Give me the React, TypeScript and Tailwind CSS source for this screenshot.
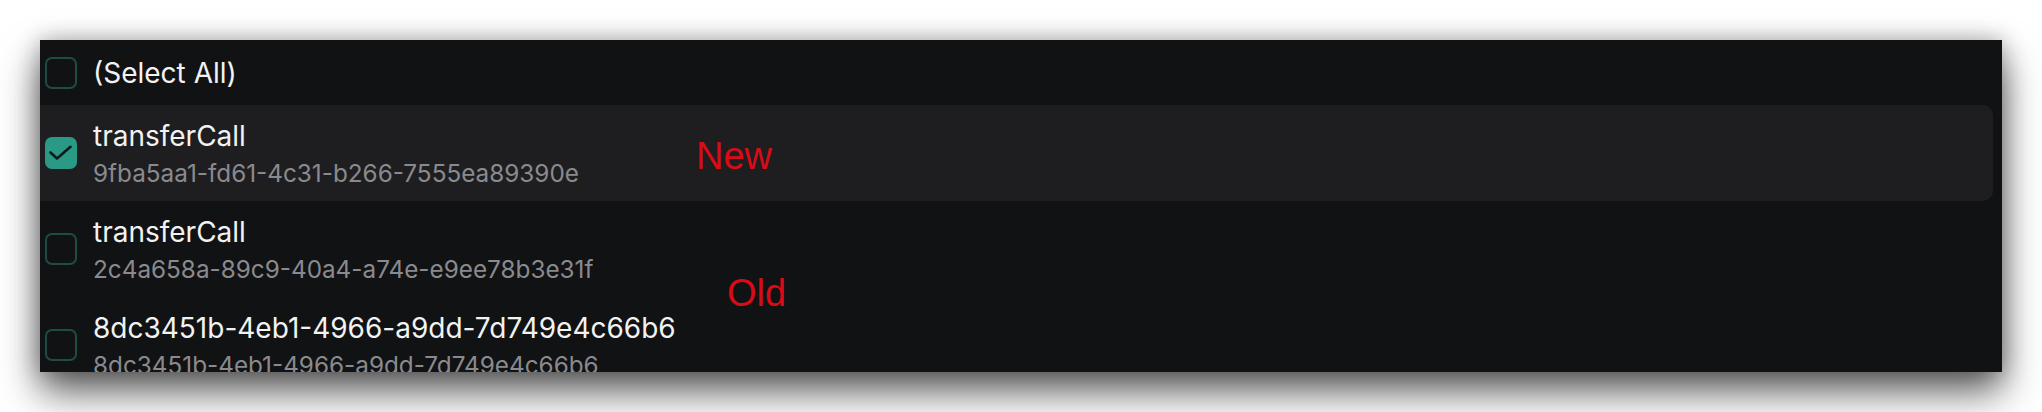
const items = [
  { title: "transferCall", id: "9fba5aa1-fd61-4c31-b266-7555ea89390e", checked: true },
  { title: "transferCall", id: "2c4a658a-89c9-40a4-a74e-e9ee78b3e31f", checked: false },
  {
    title: "8dc3451b-4eb1-4966-a9dd-7d749e4c66b6",
    id: "8dc3451b-4eb1-4966-a9dd-7d749e4c66b6",
    checked: false,
  },
];

function Checkbox({ checked }: { checked: boolean }) {
  if (checked) {
    return (
      <div className="w-8 h-8 shrink-0 rounded-[7px] bg-[#2a9a87] flex items-center justify-center">
        <svg width="32" height="32" viewBox="0 0 32 32" fill="none">
          <path
            d="M5.5 15.5 L12 21.5 L25.5 9.8"
            stroke="#0f1a18"
            strokeWidth="2.6"
            strokeLinecap="round"
            strokeLinejoin="round"
          />
        </svg>
      </div>
    );
  }
  return <div className="w-8 h-8 shrink-0 rounded-[7px] border-2 border-[#1f4c45]" />;
}

export default function App() {
  return (
    <div className="w-[2042px] h-[412px] bg-white pt-10 px-10 font-['Inter',sans-serif]">
      <div className="relative h-[332px] bg-[#111214] overflow-hidden shadow-[0_20px_36px_rgba(0,0,0,0.62),0_0_22px_rgba(0,0,0,0.28)]">
        <div className="pr-[9px]">
          <div className="h-[65px] flex items-center gap-4 pl-[5px]">
            <Checkbox checked={false} />
            <span className="text-[28px] leading-[36px] text-[#f2f2f2]">(Select All)</span>
          </div>
          {items.map((item, i) => (
            <div
              key={i}
              className={
                "h-24 flex items-center gap-4 pl-[5px] rounded-r-[10px] " +
                (item.checked ? "bg-[#1e1e20]" : "")
              }
            >
              <Checkbox checked={item.checked} />
              <div className="flex flex-col">
                <span className="text-[28px] leading-[36px] text-[#f2f2f2]">{item.title}</span>
                <span className="mt-[3px] text-[24.3px] leading-[32px] text-[#8a8a8e]">{item.id}</span>
              </div>
            </div>
          ))}
        </div>

        <span className="absolute left-[656px] top-[97px] text-[38px] leading-none text-[#d80b16] font-['Liberation_Sans',sans-serif]">
          New
        </span>
        <span className="absolute left-[687px] top-[234px] text-[38px] leading-none text-[#d80b16] font-['Liberation_Sans',sans-serif]">
          Old
        </span>
      </div>
    </div>
  );
}
